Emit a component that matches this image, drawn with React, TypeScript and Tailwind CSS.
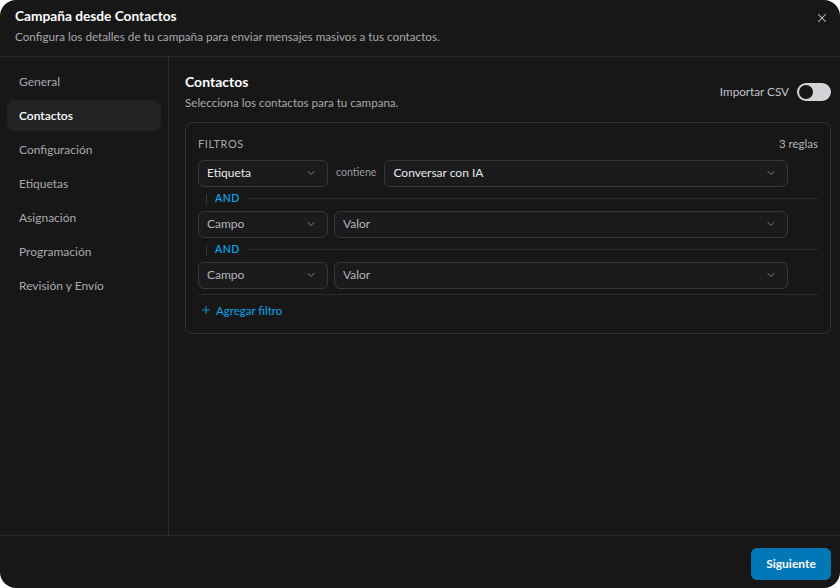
import { ChevronDown, Plus, X } from "lucide-react";

const steps = [
    "General",
    "Contactos",
    "Configuración",
    "Etiquetas",
    "Asignación",
    "Programación",
    "Revisión y Envío",
];

function Select({ label, className, muted }: { label: string; className: string; muted?: boolean }) {
    return (
        <div
            className={
                "h-[27px] flex items-center justify-between rounded-md border border-[#38383c] bg-[#1b1b1e] pl-2 pr-2.5 text-[12px] " +
                className
            }
        >
            <span className={muted ? "text-[#b4b4b8]" : "text-[#e8e8ea]"}>{label}</span>
            <ChevronDown size={12} strokeWidth={1.8} className="text-[#8a8a8f]" />
        </div>
    );
}

function AndDivider() {
    return (
        <div className="flex items-center h-[24px] pl-2">
            <div className="w-px h-[10px] bg-[#3a3a3e]" />
            <span className="ml-2 text-[10.5px] font-semibold tracking-wider text-[#0ea5e9]">AND</span>
            <div className="ml-2 flex-1 h-px bg-[#2c2c30]" />
        </div>
    );
}

export default function App() {
    return (
        <div className="w-[840px] h-[588px] bg-white" style={{ fontFamily: "Lato, 'Noto Sans', sans-serif" }}>
            <div className="w-full h-full flex flex-col rounded-2xl bg-[#171718] overflow-hidden">
                {/* header */}
                <div className="relative h-[57px] border-b border-[#2a2a2d] px-[15px] pt-[6px]">
                    <h1 className="text-[13.7px] font-bold text-white leading-[20px]">Campaña desde Contactos</h1>
                    <p className="text-[11.7px] text-[#a8a8ad] mt-[2px]">
                        Configura los detalles de tu campaña para enviar mensajes masivos a tus contactos.
                    </p>
                    <X size={14} strokeWidth={1.8} className="absolute right-[11px] top-[11px] text-[#c8c8cc]" />
                </div>

                <div className="flex flex-1">
                    {/* sidebar */}
                    <div className="w-[169px] border-r border-[#2a2a2d] px-[7px] pt-[9px] flex flex-col gap-[3px]">
                        {steps.map((s) => (
                            <div
                                key={s}
                                className={
                                    s === "Contactos"
                                        ? "h-[31px] flex items-center px-3 rounded-lg bg-[#232325] text-[12px] font-semibold text-white"
                                        : "h-[31px] flex items-center px-3 rounded-lg text-[12px] text-[#a8a8ad]"
                                }
                            >
                                {s}
                            </div>
                        ))}
                    </div>

                    {/* main */}
                    <div className="flex-1 pr-[9px] pt-[16px] pl-[16px]">
                        <div className="flex items-start justify-between">
                            <div>
                                <h2 className="text-[14px] font-bold text-white leading-[18px]">Contactos</h2>
                                <p className="text-[11.6px] text-[#a8a8ad] mt-[3px]">Selecciona los contactos para tu campana.</p>
                            </div>
                            <div className="flex items-center gap-2 mt-[10px]">
                                <span className="text-[11.7px] text-[#c4c4c8]">Importar CSV</span>
                                <div className="w-[34px] h-[18px] rounded-full bg-[#d4d4d8] flex items-center px-[2px]">
                                    <div className="w-[14px] h-[14px] rounded-full bg-[#171718]" />
                                </div>
                            </div>
                        </div>

                        <div className="mt-[11px] rounded-lg border border-[#333337] px-3 pt-[12px] pb-[14px]">
                            <div className="flex items-center justify-between mb-[7px]">
                                <span className="text-[11px] tracking-wider text-[#a8a8ad]">FILTROS</span>
                                <span className="text-[11.5px] text-[#b4b4b8]">3 reglas</span>
                            </div>

                            <div className="flex items-center pr-[30px]">
                                <Select label="Etiqueta" className="w-[130px]" />
                                <span className="mx-2 text-[10.6px] text-[#9a9a9f]">contiene</span>
                                <Select label="Conversar con IA" className="flex-1" />
                            </div>
                            <AndDivider />
                            <div className="flex items-center gap-[6px] pr-[30px]">
                                <Select label="Campo" className="w-[130px]" muted />
                                <Select label="Valor" className="flex-1" muted />
                            </div>
                            <AndDivider />
                            <div className="flex items-center gap-[6px] pr-[30px]">
                                <Select label="Campo" className="w-[130px]" muted />
                                <Select label="Valor" className="flex-1" muted />
                            </div>
                            <div className="mt-[5px] h-px bg-[#2c2c30]" />
                            <div className="mt-[7px] flex items-center gap-[4px] pl-[2px] text-[11.5px] text-[#0ea5e9]">
                                <Plus size={12} strokeWidth={1.8} />
                                <span>Agregar filtro</span>
                            </div>
                        </div>
                    </div>
                </div>

                {/* footer */}
                <div className="h-[53px] border-t border-[#2a2a2d] flex items-end justify-end px-[9px] pb-[8px]">
                    <button className="h-[32px] w-[80px] rounded-md bg-[#0077b6] text-[12px] font-bold text-white">
                        Siguiente
                    </button>
                </div>
            </div>
        </div>
    );
}
